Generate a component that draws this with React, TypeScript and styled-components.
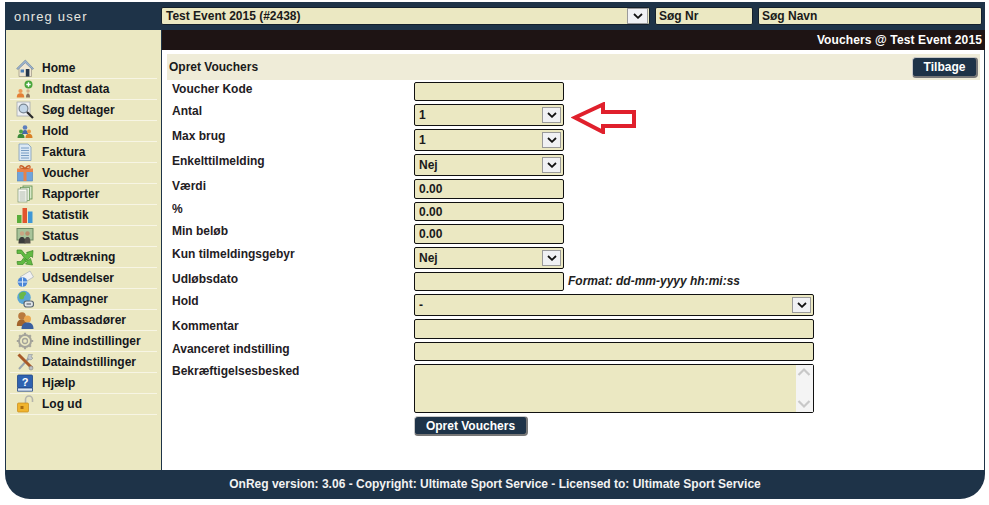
import React from "react";
import styled, { createGlobalStyle } from "styled-components";

const navy = "#1e3348";
const cream = "#ebe8c2";

const GlobalStyle = createGlobalStyle`
  html, body {
    margin: 0;
    padding: 0;
    background: #fff;
    font-family: "Liberation Sans", Arial, sans-serif;
    font-size: 12px;
    font-weight: 700;
    color: #1a1a1a;
  }
`;

type IconName =
  | "home" | "add" | "search" | "team" | "invoice" | "gift" | "reports" | "stats" | "status"
  | "draw" | "mail" | "globe" | "people" | "gear" | "tools" | "help" | "lock";

const Icon: React.FC<{ name: IconName }> = ({ name }) => {
  const art: Record<IconName, React.ReactNode> = {
    home: (
      <>
        <path d="M3 9v8.500h12.500V9L9.300 3z" fill="#efe6d2" stroke="#9a9282" strokeWidth=".7" />
        <path d="M.6 9.600 9.300 1l8.300 8.600-1.300.8-7-6.600-7.300 6.700z" fill="#9db4cf" stroke="#6a7f9a" strokeWidth=".6" />
        <rect x="9.800" y="10" width="3.600" height="7.500" fill="#26364a" />
        <rect x="4.600" y="10.500" width="3.400" height="3" fill="#4f7fb5" />
      </>
    ),
    add: (
      <>
        <circle cx="4.500" cy="11" r="2.100" fill="#ee9a55" />
        <path d="M.8 17.500c0-3.500 1.500-4.300 3.700-4.300s3.700.8 3.700 4.300z" fill="#e47f35" />
        <circle cx="12" cy="11" r="1.700" fill="#d9b48c" />
        <path d="M10 17.500c0-3 .8-4 2-4s2 1 2 4z" fill="#8a7460" />
        <circle cx="12.500" cy="4.500" r="4" fill="#4aa63c" />
        <path d="M12.500 2.300v4.400M10.300 4.500h4.400" stroke="#fff" strokeWidth="1.400" />
      </>
    ),
    search: (
      <>
        <rect x="1" y="1" width="13" height="14" fill="#eef0f2" stroke="#a5abb2" strokeWidth=".8" />
        <circle cx="7.500" cy="7.500" r="4.400" fill="#c3d6e8" stroke="#7a8794" strokeWidth="1.200" />
        <path d="M11 11 17 17" stroke="#2b2b2b" strokeWidth="2.200" />
      </>
    ),
    team: (
      <>
        <circle cx="9" cy="5.500" r="2.300" fill="#5d7fbd" />
        <path d="M6 12c0-3 1.300-4 3-4s3 1 3 4z" fill="#4869a8" />
        <circle cx="5" cy="9.500" r="2" fill="#4da24a" />
        <path d="M1.500 16c0-3 1.400-4.200 3.500-4.200S8.500 13 8.500 16z" fill="#3d8a39" />
        <circle cx="13" cy="9.500" r="2" fill="#e59a45" />
        <path d="M9.500 16c0-3 1.400-4.200 3.500-4.200s3.500 1.200 3.500 4.200z" fill="#d88026" />
      </>
    ),
    invoice: (
      <>
        <path d="M3 1h9l3 3v13.500H3z" fill="#dbe8f4" stroke="#7f9cba" strokeWidth=".8" />
        <path d="M5 5h8M5 7.500h8M5 10h8M5 12.500h8M5 15h8" stroke="#6b93bd" strokeWidth=".9" />
      </>
    ),
    gift: (
      <>
        <rect x="1.500" y="7.500" width="15" height="9.500" fill="#6fa3dc" stroke="#4d7fb8" strokeWidth=".6" />
        <rect x="1" y="4.500" width="16" height="3.500" fill="#e8824a" />
        <rect x="7.500" y="4.500" width="3" height="12.500" fill="#e8824a" />
        <path d="M9 4.500C6 1 3.500 1 4 3.500 4.300 4.500 7 4.500 9 4.500c2 0 4.700 0 5-1C14.500 1 12 1 9 4.500z" fill="none" stroke="#c9602a" strokeWidth="1.300" />
      </>
    ),
    reports: (
      <>
        <rect x="7" y="1" width="9" height="13" fill="#d8e8c8" stroke="#5b8a4a" strokeWidth=".8" />
        <rect x="4.500" y="2.500" width="9" height="13" fill="#e6efe0" stroke="#6d9a5c" strokeWidth=".8" />
        <rect x="2" y="4" width="9" height="13" fill="#fbfbf6" stroke="#8aa080" strokeWidth=".8" />
        <path d="M3.500 7h6M3.500 9h6M3.500 11h6M3.500 13h6M3.500 15h6" stroke="#9aa89a" strokeWidth=".8" />
      </>
    ),
    stats: (
      <>
        <rect x="1" y="9" width="4.500" height="8" fill="#59ad3a" />
        <rect x="6.500" y="2" width="4.500" height="15" fill="#e2552e" />
        <rect x="12" y="5.500" width="4.500" height="11.500" fill="#3f97d6" />
      </>
    ),
    status: (
      <>
        <rect x="1" y="1.500" width="16" height="11.500" fill="#a8c49a" stroke="#6c8a62" strokeWidth="1" />
        <circle cx="6" cy="6.500" r="2.200" fill="#c9a583" />
        <circle cx="11.500" cy="6.500" r="2.200" fill="#b98d6c" />
        <path d="M2.500 16.500c0-5 1.500-6.500 3.500-6.500S9.500 11.500 9.500 16.500z" fill="#3b3b3b" />
        <path d="M8.500 16.500c0-5 1-6.500 3-6.500S14.500 11.500 14.500 16.500z" fill="#55504a" />
      </>
    ),
    draw: (
      <>
        <path d="M1 2h4.500l4 5 2.500-2.500h-1.500L17 2.500l-.5 7L15 8l-8 8.500H1.500l-.5-3h4l3-4-3-4H1z" fill="#62bb42" stroke="#3c8a28" strokeWidth=".7" />
        <path d="M9.500 10.500l2 2 3-2 2 6.500-7-1 1.500-1.500-2.500-2.500z" fill="#62bb42" stroke="#3c8a28" strokeWidth=".7" />
      </>
    ),
    mail: (
      <>
        <path d="M4 8l10-6 3.500 6-10 6z" fill="#f2f2f2" stroke="#a8b0b8" strokeWidth=".7" />
        <circle cx="6.500" cy="13" r="4.800" fill="#4a86d8" />
        <path d="M2 13h9M6.500 8.500v9" stroke="#dce9f8" strokeWidth="1" />
      </>
    ),
    globe: (
      <>
        <circle cx="8" cy="7.500" r="6.800" fill="#5aa6d6" />
        <path d="M3 4c3-3 6-2.500 7-1 .5 2-2 2.500-2 4.500S5 10 3.500 8.500z" fill="#69b84a" />
        <rect x="8" y="11" width="9.500" height="6" rx="2.500" fill="#dfe4e8" stroke="#5a6670" strokeWidth="1.200" />
        <path d="M10.500 14h4.500" stroke="#5a6670" strokeWidth="1.200" />
      </>
    ),
    people: (
      <>
        <circle cx="6" cy="5" r="3.800" fill="#b97a3e" />
        <path d="M.8 15c0-5 2-6.500 5.200-6.500S11 10 11 15z" fill="#a3642c" />
        <circle cx="11.500" cy="8" r="3.500" fill="#eba84f" />
        <path d="M5.500 18c0-5 2.500-6.500 6-6.500s6 1.500 6 6.500z" fill="#3a5f9e" />
      </>
    ),
    gear: (
      <>
        <circle cx="9" cy="9" r="6" fill="none" stroke="#a3a39a" strokeWidth="2" />
        <circle cx="9" cy="9" r="2.500" fill="none" stroke="#a3a39a" strokeWidth="1.300" />
        <path d="M9 .8v3M9 14.200v3M.8 9h3M14.200 9h3M3.200 3.200l2.100 2.100M12.700 12.700l2.100 2.100M14.800 3.200l-2.100 2.100M5.300 12.700l-2.100 2.100" stroke="#a3a39a" strokeWidth="2.200" />
      </>
    ),
    tools: (
      <>
        <path d="M3 16 14 4" stroke="#9aa4ac" strokeWidth="2" />
        <path d="M12.500 1.500l4 0-1.500 2.500 2 1-2 2-3.500-1.500z" fill="#c2c8cc" stroke="#7d858b" strokeWidth=".5" />
        <path d="M2.500 1.500 16 15" stroke="#a85a28" strokeWidth="3" />
        <circle cx="15" cy="15" r="2" fill="#b9bec2" stroke="#777" strokeWidth=".5" />
      </>
    ),
    help: (
      <>
        <rect x="1.500" y="1" width="15" height="13" rx="1" fill="#2f62b0" stroke="#1f4585" strokeWidth=".8" />
        <path d="M1.500 14h15v3.200h-15z" fill="#dde6f2" stroke="#1f4585" strokeWidth=".8" />
        <text x="9" y="11.500" textAnchor="middle" fontSize="11" fontWeight="700" fill="#fff" fontFamily="Liberation Sans">?</text>
      </>
    ),
    lock: (
      <>
        <path d="M9.500 8V4.500a3.500 3.500 0 0 1 7 0V7" fill="none" stroke="#b5b5ac" strokeWidth="1.600" />
        <rect x="1.500" y="8" width="11" height="9" rx="1" fill="#f0b42e" stroke="#c78a18" strokeWidth=".7" />
        <rect x="4.500" y="11" width="3" height="3" fill="#a86c10" />
      </>
    ),
  };
  return (
    <svg width="18" height="18" viewBox="0 0 18 18" aria-hidden="true">
      {art[name]}
    </svg>
  );
};

const menu: { label: string; icon: IconName }[] = [
  { label: "Home", icon: "home" },
  { label: "Indtast data", icon: "add" },
  { label: "Søg deltager", icon: "search" },
  { label: "Hold", icon: "team" },
  { label: "Faktura", icon: "invoice" },
  { label: "Voucher", icon: "gift" },
  { label: "Rapporter", icon: "reports" },
  { label: "Statistik", icon: "stats" },
  { label: "Status", icon: "status" },
  { label: "Lodtrækning", icon: "draw" },
  { label: "Udsendelser", icon: "mail" },
  { label: "Kampagner", icon: "globe" },
  { label: "Ambassadører", icon: "people" },
  { label: "Mine indstillinger", icon: "gear" },
  { label: "Dataindstillinger", icon: "tools" },
  { label: "Hjælp", icon: "help" },
  { label: "Log ud", icon: "lock" },
];

const Chevron: React.FC = () => (
  <svg width="10" height="6" viewBox="0 0 10 6" aria-hidden="true">
    <path d="M1 1l4 3.800L9 1" fill="none" stroke="#111" strokeWidth="1.800" />
  </svg>
);

const App: React.FC = () => (
  <>
    <GlobalStyle />
    <Page>
      <TopBar>
        <Brand>onreg user</Brand>
        <TopFields>
          <EventSelect>
            Test Event 2015 (#2438)
            <TopArrow><Chevron /></TopArrow>
          </EventSelect>
          <SearchNr>Søg Nr</SearchNr>
          <SearchName>Søg Navn</SearchName>
        </TopFields>
      </TopBar>
      <Middle>
        <Sidebar>
          {menu.map((item) => (
            <MenuItem key={item.label}>
              <MenuIcon><Icon name={item.icon} /></MenuIcon>
              {item.label}
            </MenuItem>
          ))}
        </Sidebar>
        <Main>
          <TitleBar>Vouchers @ Test Event 2015</TitleBar>
          <Section>
            <SectionHead>
              Opret Vouchers
              <BackButton>Tilbage</BackButton>
            </SectionHead>
            <Form>
              <Label>Voucher Kode</Label>
              <Field />
              <Label>Antal</Label>
              <SelectBox>1<SelectArrow><Chevron /></SelectArrow></SelectBox>
              <Label>Max brug</Label>
              <SelectBox>1<SelectArrow><Chevron /></SelectArrow></SelectBox>
              <Label>Enkelttilmelding</Label>
              <SelectBox>Nej<SelectArrow><Chevron /></SelectArrow></SelectBox>
              <Label>Værdi</Label>
              <Field>0.00</Field>
              <Label>%</Label>
              <Field>0.00</Field>
              <Label>Min beløb</Label>
              <Field>0.00</Field>
              <Label>Kun tilmeldingsgebyr</Label>
              <SelectBox>Nej<SelectArrow><Chevron /></SelectArrow></SelectBox>
              <Label>Udløbsdato</Label>
              <DateRow>
                <Field />
                <FormatHint>Format: dd-mm-yyyy hh:mi:ss</FormatHint>
              </DateRow>
              <Label>Hold</Label>
              <SelectBox $wide>-<SelectArrow><Chevron /></SelectArrow></SelectBox>
              <Label>Kommentar</Label>
              <Field $wide />
              <Label>Avanceret indstilling</Label>
              <Field $wide />
              <Label>Bekræftigelsesbesked</Label>
              <TextArea>
                <ScrollTrack>
                  <svg width="16" height="46" viewBox="0 0 16 46" aria-hidden="true">
                    <path d="M2.500 10 8 4.500 13.500 10M2.500 36 8 41.500 13.500 36" fill="none" stroke="#c8c8c8" strokeWidth="2.200" />
                  </svg>
                </ScrollTrack>
              </TextArea>
              <span />
              <SubmitButton>Opret Vouchers</SubmitButton>
            </Form>
            <Annotation width="66" height="32" viewBox="0 0 66 32" aria-hidden="true">
              <path d="M4 15.500 32 2.500v7.500h31v14H32v6z" fill="#fff" stroke="#e0202c" strokeWidth="4" strokeLinejoin="miter" />
            </Annotation>
          </Section>
        </Main>
      </Middle>
      <Footer>OnReg version: 3.06 - Copyright: Ultimate Sport Service - Licensed to: Ultimate Sport Service</Footer>
    </Page>
  </>
);

const Page = styled.div`
  width: 980px;
  height: 497px;
  margin: 2px 0 0 5px;
  display: flex;
  flex-direction: column;
`;

const TopBar = styled.header`
  height: 28px;
  background: ${navy};
  display: flex;
  flex-shrink: 0;
`;

const Brand = styled.div`
  width: 156px;
  padding: 7px 0 0 9px;
  box-sizing: border-box;
  color: #e6e6e0;
  font-size: 13px;
  font-weight: 400;
  letter-spacing: 1.15px;
`;

const TopFields = styled.div`
  display: flex;
  gap: 5px;
  padding-top: 5px;
`;

const TopBox = styled.div`
  height: 18px;
  box-sizing: border-box;
  background: ${cream};
  border: 1px solid #14202c;
  border-radius: 2px;
  padding: 0 4px;
  display: flex;
  align-items: center;
  justify-content: space-between;
`;

const EventSelect = styled(TopBox)`
  width: 489px;
  padding-right: 1px;
`;

const SearchNr = styled(TopBox)`
  width: 98px;
  padding-left: 3px;
`;

const SearchName = styled(TopBox)`
  width: 224px;
  padding-left: 3px;
`;

const Middle = styled.div`
  flex: 1;
  display: flex;
  min-height: 0;
`;

const Sidebar = styled.nav`
  width: 157px;
  box-sizing: border-box;
  background: ${cream};
  border-left: 1px solid #1e3348;
  border-right: 1px solid #1e3348;
  padding: 28px 4px 0 4px;
`;

const MenuItem = styled.div`
  height: 21px;
  box-sizing: border-box;
  display: flex;
  align-items: center;
  border-bottom: 1px solid #f7f5e4;
  padding-left: 6px;
  color: #14171c;
  white-space: nowrap;
`;

const MenuIcon = styled.span`
  width: 26px;
  height: 18px;
  flex-shrink: 0;
`;

const Main = styled.main`
  flex: 1;
  min-width: 0;
  display: flex;
  flex-direction: column;
`;

const TitleBar = styled.div`
  height: 20px;
  line-height: 20px;
  background: #1e1414;
  color: #fff;
  text-align: right;
  padding-right: 3px;
  letter-spacing: 0.12px;
`;

const Section = styled.section`
  position: relative;
  flex: 1;
  padding: 4px 4px 0 5px;
  border-right: 1px solid ${navy};
`;

const SectionHead = styled.div`
  height: 26px;
  background: #efecd8;
  display: flex;
  align-items: center;
  justify-content: space-between;
  padding: 0 2px 0 2px;
`;

const RaisedButton = styled.button`
  font: inherit;
  color: #fff;
  background: ${navy};
  border: 1px solid #c8c8c8;
  border-right: 2px solid #777;
  border-bottom: 2px solid #777;
  border-radius: 4px;
  padding: 0;
`;

const BackButton = styled(RaisedButton)`
  width: 66px;
  height: 21px;
`;

const Form = styled.div`
  display: grid;
  grid-template-columns: 242px 1fr;
  row-gap: 3px;
  padding: 1.5px 0 0 5px;
  align-content: start;
`;

const Label = styled.div`
  line-height: 14px;
  color: #1f2024;
`;

const Field = styled.div<{ $wide?: boolean }>`
  width: ${(p) => (p.$wide ? "400px" : "150px")};
  height: 19.5px;
  box-sizing: border-box;
  background: ${cream};
  border: 1px solid #111;
  border-radius: 2px;
  padding: 0 4px;
  line-height: 18px;
`;

const SelectBox = styled(Field)`
  height: 22px;
  display: flex;
  align-items: center;
  justify-content: space-between;
  padding-right: 2px;
`;

const SelectArrow = styled.span`
  width: 19px;
  height: 16px;
  box-sizing: border-box;
  background: #f0f1f4;
  border: 1px solid #9a9a9a;
  display: flex;
  align-items: center;
  justify-content: center;
`;

const TopArrow = styled(SelectArrow)`
  width: 21px;
  height: 16px;
`;

const DateRow = styled.div`
  display: flex;
  align-items: center;
  gap: 4px;
`;

const FormatHint = styled.em`
  color: #222;
`;

const TextArea = styled.div`
  width: 400px;
  height: 49px;
  box-sizing: border-box;
  background: ${cream};
  border: 1px solid #111;
  border-radius: 2px;
  display: flex;
  justify-content: flex-end;
`;

const ScrollTrack = styled.div`
  width: 17px;
  background: #f4f4f4;
`;

const SubmitButton = styled(RaisedButton)`
  width: 114px;
  height: 20px;
`;

const Annotation = styled.svg`
  position: absolute;
  left: 409px;
  top: 52px;
`;

const Footer = styled.footer`
  height: 29px;
  padding-bottom: 2px;
  box-sizing: border-box;
  flex-shrink: 0;
  background: ${navy};
  color: #f2f2f2;
  border-radius: 0 0 25px 25px;
  display: flex;
  align-items: center;
  justify-content: center;
`;

export default App;
